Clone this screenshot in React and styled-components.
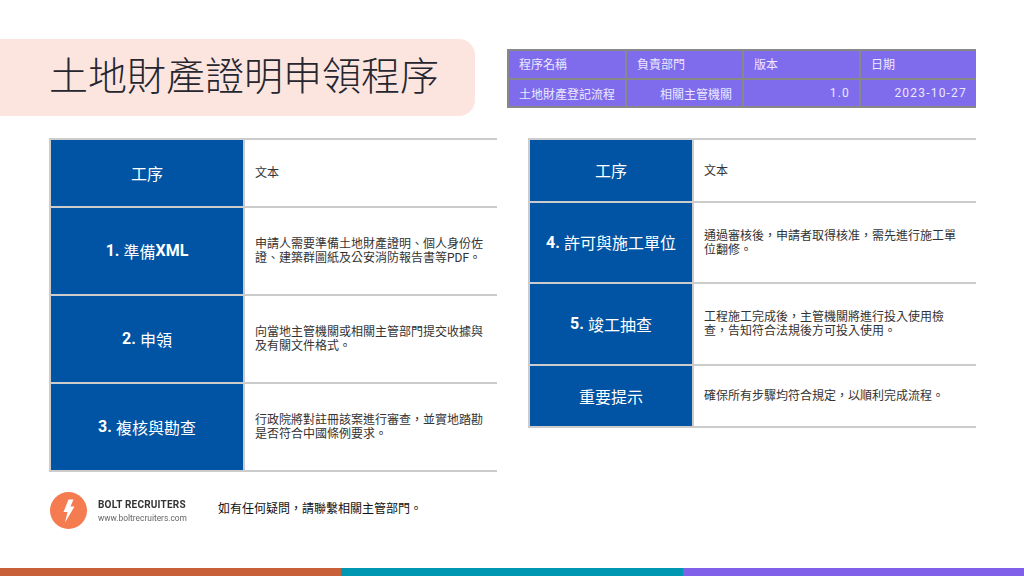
import React from "react";
import styled, { createGlobalStyle } from "styled-components";

const CJK = `Roboto, "Noto Sans CJK TC", sans-serif`;

const Global = createGlobalStyle`
  html, body { margin: 0; padding: 0; background: #fff; }
  body { font-family: ${CJK}; }
`;

const Page = styled.div`
  width: 1024px;
  height: 576px;
  display: flex;
  flex-direction: column;
  overflow: hidden;
  background: #fff;
`;

const Header = styled.header`
  flex: none;
  box-sizing: border-box;
  display: flex;
  align-items: flex-start;
  height: 99px;
  padding-top: 39px;
`;

const TitleBand = styled.div`
  width: 475px;
  height: 77px;
  box-sizing: border-box;
  padding-left: 49px;
  display: flex;
  align-items: center;
  background: #fce5df;
  border-radius: 0 16px 16px 0;
`;

const Title = styled.h1`
  margin: 0;
  font-size: 39px;
  line-height: 75px;
  font-weight: 300;
  color: #26262f;
  white-space: nowrap;
`;

const MetaTable = styled.div`
  margin: 10px 0 0 32px;
  width: 469px;
  height: 59px;
  overflow: hidden;
  display: grid;
  grid-template-columns: 118px 117px 117px 117px;
  grid-template-rows: 29px 28px 2px;
  background: #888;
`;

const MetaCell = styled.div`
  box-sizing: border-box;
  margin: 2px 0 0 2px;
  padding: 0 ${p => (p.$spaced ? "9px" : "10px")} ${p => (p.$head ? "2px" : "0")} 10px;
  display: flex;
  align-items: center;
  justify-content: ${p => (p.$right ? "flex-end" : "flex-start")};
  background: #7e6cec;
  color: #ece8ff;
  font-size: 12px;
  white-space: nowrap;
  letter-spacing: ${p => (p.$spaced ? "1.2px" : "0")};
`;

const Body = styled.main`
  flex: none;
  display: flex;
  align-items: flex-start;
  padding-top: 39px;
  padding-left: 49px;
`;

const Column = styled.section`
  width: 448px;
`;

const RightColumn = styled.section`
  width: 448px;
  margin-left: 31px;
`;

const Table = styled.div`
  border-top: 2px solid #ccc;
  border-left: 2px solid #ccc;
  display: grid;
  grid-template-columns: ${p => p.$labelWidth}px 1fr;
`;

const Label = styled.div`
  box-sizing: border-box;
  height: ${p => p.$h + 2}px;
  padding-bottom: 1px;
  display: flex;
  align-items: center;
  justify-content: center;
  background: #0054a3;
  color: #fff;
  font-size: 16px;
  white-space: pre;
  border-right: 2px solid #ccc;
  border-bottom: 2px solid #ccc;
`;

const Strong = styled.b`
  font-weight: 700;
`;

const Desc = styled.div`
  box-sizing: border-box;
  height: ${p => p.$h + 2}px;
  display: flex;
  align-items: center;
  padding: 0 10px;
  background: #fff;
  border-bottom: 2px solid #ccc;
  color: #333;
  font-size: 12px;
  line-height: 14px;
`;

const Footer = styled.div`
  display: flex;
  align-items: center;
  margin-top: 20px;
`;

const Logo = styled.div`
  display: flex;
  align-items: center;
  gap: 11px;
  width: 168px;
  margin-left: 1px;
  filter: blur(0.3px);
`;

const LogoText = styled.div`
  display: flex;
  flex-direction: column;
  gap: 3px;
`;

const Brand = styled.div`
  font-size: 10px;
  line-height: 11px;
  font-weight: 700;
  letter-spacing: 0.2px;
  color: #333;
  white-space: nowrap;
`;

const Url = styled.div`
  font-size: 8.4px;
  line-height: 10px;
  color: #666;
  white-space: nowrap;
`;

const Note = styled.div`
  font-size: 12px;
  line-height: 14px;
  padding-bottom: 4px;
  color: #111;
  white-space: nowrap;
`;

const Stripe = styled.div`
  margin-top: auto;
  flex: none;
  height: 8px;
  display: grid;
  grid-template-columns: 341px 342px 341px;
`;

const StripePart = styled.div`
  background: ${p => p.$color};
`;

const Bolt = () => (
  <svg width="37" height="37" viewBox="0 0 37 37" aria-hidden="true">
    <circle cx="18.5" cy="18.5" r="18.5" fill="#f47c50" />
    <path d="M18.5 7.5 L23.5 7.5 L20.5 14.5 L24.5 14.5 L15 30.5 L17.5 20 L13.5 20 Z" fill="#fff" />
  </svg>
);

const leftRows = [
  { h: 66, label: "工序", text: "文本" },
  { h: 86, label: <><Strong>1.</Strong> 準備<Strong>XML</Strong></>, text: "申請人需要準備土地財產證明、個人身份佐證、建築群圖紙及公安消防報告書等PDF。" },
  { h: 86, label: <><Strong>2.</Strong> 申領</>, text: "向當地主管機關或相關主管部門提交收據與及有關文件格式。" },
  { h: 86, label: <><Strong>3.</Strong> 複核與勘查</>, text: "行政院將對註冊該案進行審查\uFF0C並實地踏勘是否符合中國條例要求。" },
];

const rightRows = [
  { h: 61, label: "工序", text: "文本" },
  { h: 79, label: <><Strong>4.</Strong> 許可與施工單位</>, text: "通過審核後\uFF0C申請者取得核准\uFF0C需先進行施工單位翻修。" },
  { h: 80, label: <><Strong>5.</Strong> 竣工抽查</>, text: "工程施工完成後\uFF0C主管機關將進行投入使用檢查\uFF0C告知符合法規後方可投入使用。" },
  { h: 60, label: "重要提示", text: "確保所有步驟均符合規定\uFF0C以順利完成流程。" },
];

const Rows = ({ rows, labelWidth }) => (
  <Table $labelWidth={labelWidth}>
    {rows.map((r, i) => (
      <React.Fragment key={i}>
        <Label $h={r.h}>{r.label}</Label>
        <Desc $h={r.h}>{r.text}</Desc>
      </React.Fragment>
    ))}
  </Table>
);

export default function App() {
  return (
    <Page lang="zh-TW">
      <Global />
      <Header>
        <TitleBand>
          <Title>土地財產證明申領程序</Title>
        </TitleBand>
        <MetaTable>
          <MetaCell $head>程序名稱</MetaCell>
          <MetaCell $head>負責部門</MetaCell>
          <MetaCell $head>版本</MetaCell>
          <MetaCell $head>日期</MetaCell>
          <MetaCell>土地財產登記流程</MetaCell>
          <MetaCell $right>相關主管機關</MetaCell>
          <MetaCell $right $spaced>1.0</MetaCell>
          <MetaCell $right $spaced>2023-10-27</MetaCell>
        </MetaTable>
      </Header>
      <Body>
        <Column>
          <Rows rows={leftRows} labelWidth={194} />
          <Footer>
            <Logo>
              <Bolt />
              <LogoText>
                <Brand>BOLT RECRUITERS</Brand>
                <Url>www.boltrecruiters.com</Url>
              </LogoText>
            </Logo>
            <Note>{"如有任何疑問\uFF0C請聯繫相關主管部門。"}</Note>
          </Footer>
        </Column>
        <RightColumn>
          <Rows rows={rightRows} labelWidth={164} />
        </RightColumn>
      </Body>
      <Stripe>
        <StripePart $color="#c8603a" />
        <StripePart $color="#0097b2" />
        <StripePart $color="#8060e8" />
      </Stripe>
    </Page>
  );
}
